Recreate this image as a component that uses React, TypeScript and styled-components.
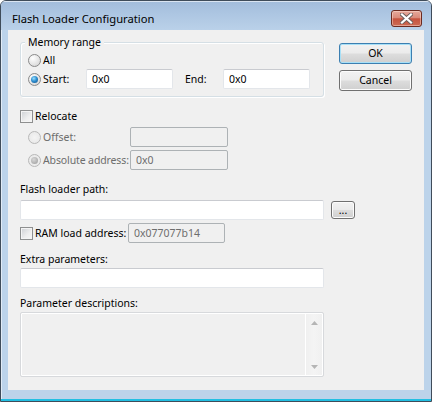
import React from "react";
import styled, { createGlobalStyle, css } from "styled-components";

const UI_FONT = `"Noto Sans", "Segoe UI", sans-serif`;

const GlobalStyle = createGlobalStyle`
  html, body { margin: 0; padding: 0; background: #ffffff; }
  body {
    font-family: ${UI_FONT};
    font-size: 10.5px;
    color: #000000;
  }
  * { box-sizing: border-box; }
`;

/* ---------- window chrome ---------- */

const Window = styled.div`
  width: 432px;
  height: 402px;
  display: flex;
  flex-direction: column;
  border: 1px solid #3f4c5a;
  border-radius: 6px 6px 0 0;
  background: #bcd3ea;
  box-shadow: inset 0 -2px 0 #22bfe2, inset 1px 1px 0 rgba(255, 255, 255, 0.55);
  padding: 0 7px 11px 7px;
  overflow: hidden;
`;

const TitleBar = styled.div`
  height: 29px;
  margin: 0 -7px;
  padding: 9px 9px 0 11px;
  display: flex;
  align-items: flex-start;
  justify-content: space-between;
  background: linear-gradient(to bottom, #a2bcdb 0%, #adc6e2 45%, #bad1e9 100%);
  box-shadow: inset 0 1px 0 rgba(255, 255, 255, 0.6);
`;

const Title = styled.span`
  font-size: 11.2px;
  line-height: 17px;
  color: #000;
`;

const CloseButton = styled.div`
  width: 31px;
  height: 17px;
  border: 1px solid #6b2a20;
  border-radius: 3px;
  display: flex;
  align-items: center;
  justify-content: center;
  background: linear-gradient(
    to bottom,
    #e6a99c 0%,
    #da8b7b 45%,
    #c6533e 52%,
    #cd6b55 100%
  );
  box-shadow: inset 0 0 0 1px rgba(255, 230, 220, 0.45);
`;

const Client = styled.div`
  flex: 1;
  background: #f0f0f0;
  padding: 12px 0 0 12px;
  display: flex;
  flex-direction: column;
`;

/* ---------- common controls ---------- */

const TopRow = styled.div`
  display: flex;
  align-items: flex-start;
`;

const GroupBox = styled.div`
  position: relative;
  width: 304px;
  height: 55px;
  border: 1px solid #d5dfe5;
  border-radius: 3px;
  box-shadow: inset 1px 1px 0 #ffffff, 1px 1px 0 #ffffff;
  padding: 9px 0 0 7px;
  display: flex;
  flex-direction: column;
  gap: 1px;
`;

const GroupLegend = styled.span`
  position: absolute;
  top: -9px;
  left: 4px;
  padding: 0 3px;
  line-height: 16px;
  background: #f0f0f0;
`;

const ButtonColumn = styled.div`
  margin-left: 15px;
  margin-top: 1px;
  display: flex;
  flex-direction: column;
  gap: 6px;
`;

const PushButton = styled.button<{
  $w: number;
  $h: number;
  $ml?: number;
  $default?: boolean;
}>`
  width: ${(p) => p.$w}px;
  height: ${(p) => p.$h}px;
  margin: 0 0 0 ${(p) => p.$ml ?? 0}px;
  padding: 0;
  flex: none;
  font-family: ${UI_FONT};
  font-size: 10.5px;
  line-height: 1;
  color: #000;
  border: 1px solid #707070;
  border-radius: 3px;
  background: linear-gradient(
    to bottom,
    #f2f2f2 0%,
    #ebebeb 48%,
    #dddddd 52%,
    #cfcfcf 100%
  );
  box-shadow: inset 0 0 0 1px #fcfcfc;
  ${(p) =>
    p.$default &&
    css`
      border-color: #3c7fb1;
      box-shadow: inset 0 0 0 1px #a8e0f7;
    `}
`;

const Row = styled.div<{ $mt?: number; $h: number; $indent?: number }>`
  display: flex;
  align-items: center;
  height: ${(p) => p.$h}px;
  margin-top: ${(p) => p.$mt ?? 0}px;
  padding-left: ${(p) => p.$indent ?? 0}px;
`;

const Choice = styled.label<{ $w?: number }>`
  display: flex;
  align-items: center;
  flex: none;
  width: ${(p) => (p.$w ? `${p.$w}px` : "auto")};
`;

const Caption = styled.span<{ $disabled?: boolean; $tight?: boolean }>`
  margin-left: 2px;
  line-height: 16px;
  white-space: nowrap;
  letter-spacing: ${(p) => (p.$tight ? "-0.12px" : "0")};
  color: ${(p) => (p.$disabled ? "#6d6d6d" : "#000")};
`;

const FieldLabel = styled.div<{ $mt: number }>`
  margin-top: ${(p) => p.$mt}px;
  line-height: 16px;
  height: 16px;
`;

const InlineLabel = styled.span<{ $w: number; $ml?: number }>`
  width: ${(p) => p.$w}px;
  margin-left: ${(p) => p.$ml ?? 0}px;
  line-height: 16px;
  flex: none;
`;

const Radio = styled.span<{ $checked?: boolean; $disabled?: boolean }>`
  position: relative;
  width: 13px;
  height: 13px;
  flex: none;
  border-radius: 50%;
  border: 1px solid ${(p) => (p.$disabled ? "#b8b8b8" : "#8a8a8a")};
  background: ${(p) =>
    p.$disabled
      ? "radial-gradient(circle at 50% 50%, #f4f4f4 0%, #e6e6e6 100%)"
      : "radial-gradient(circle at 35% 30%, #ffffff 0%, #e3e3e3 60%, #cfcfcf 100%)"};
  ${(p) =>
    p.$checked &&
    css`
      &::after {
        content: "";
        position: absolute;
        left: 2px;
        top: 2px;
        width: 7px;
        height: 7px;
        border-radius: 50%;
        background: ${p.$disabled
          ? "radial-gradient(circle at 40% 35%, #d8d8d8 0%, #9a9a9a 100%)"
          : "radial-gradient(circle at 40% 35%, #9ae0ff 0%, #2f8fd0 45%, #134f86 100%)"};
      }
    `}
`;

const CheckBox = styled.span`
  width: 13px;
  height: 13px;
  flex: none;
  border: 1px solid #8e8f8f;
  background: linear-gradient(135deg, #cdd0d4 0%, #eeeeee 60%, #f7f7f7 100%);
  box-shadow: inset 0 0 0 1px #f4f4f4;
`;

const TextBox = styled.input<{ $w: number }>`
  width: ${(p) => p.$w}px;
  height: 20px;
  flex: none;
  margin: 0;
  padding: 0 5px;
  font-family: ${UI_FONT};
  font-size: 10.5px;
  color: #000;
  background: #ffffff;
  border: 1px solid;
  border-color: #c9cbd0 #e3e6ea #e3e6ea #e3e6ea;
  border-radius: 2px;
  outline: none;

  &:disabled {
    background: #f0f0f0;
    color: #6d6d6d;
    border-color: #adb2b5;
  }
`;

/* read-only memo with a disabled vertical scroll bar */
const Memo = styled.div`
  margin-top: 1px;
  width: 304px;
  height: 65px;
  display: flex;
  border: 1px solid #d7d9dc;
  border-radius: 2px;
  background: #f0f0f0;
  box-shadow: inset 0 0 0 1px #ffffff;
`;

const MemoBody = styled.div`
  flex: 1;
`;

const ScrollTrack = styled.div`
  width: 17px;
  margin: 1px 1px 1px 0;
  display: flex;
  flex-direction: column;
  justify-content: space-between;
  border-left: 1px solid #ffffff;
  background: linear-gradient(to right, #f0f0f0, #f4f4f4 50%, #f0f0f0);
`;

const ScrollArrow = styled.div`
  height: 17px;
  display: flex;
  align-items: center;
  justify-content: center;
`;

const Arrow = ({ down }: { down?: boolean }) => (
  <svg width="7" height="4" viewBox="0 0 7 4">
    <path
      d={down ? "M0 0 L7 0 L3.5 4 Z" : "M3.5 0 L7 4 L0 4 Z"}
      fill="#b5b5b5"
    />
  </svg>
);

const CloseGlyph = () => (
  <svg width="13" height="11" viewBox="0 0 13 11">
    <path
      d="M2 1.5 L11 9.5 M11 1.5 L2 9.5"
      stroke="#6b5e5c"
      strokeWidth="4"
      strokeLinecap="square"
    />
    <path
      d="M2 1.5 L11 9.5 M11 1.5 L2 9.5"
      stroke="#ffffff"
      strokeWidth="2.2"
      strokeLinecap="square"
    />
  </svg>
);

export default function App() {
  return (
    <>
      <GlobalStyle />
      <Window>
        <TitleBar>
          <Title>Flash Loader Configuration</Title>
          <CloseButton>
            <CloseGlyph />
          </CloseButton>
        </TitleBar>

        <Client>
          <TopRow>
            <GroupBox>
              <GroupLegend>Memory range</GroupLegend>
              <Row $h={16}>
                <Choice>
                  <Radio />
                  <Caption>All</Caption>
                </Choice>
              </Row>
              <Row $h={20}>
                <Choice $w={58}>
                  <Radio $checked />
                  <Caption>Start:</Caption>
                </Choice>
                <TextBox $w={87} value="0x0" readOnly />
                <InlineLabel $w={38} $ml={12}>
                  End:
                </InlineLabel>
                <TextBox $w={87} value="0x0" readOnly />
              </Row>
            </GroupBox>

            <ButtonColumn>
              <PushButton $w={73} $h={21} $default>
                OK
              </PushButton>
              <PushButton $w={73} $h={21}>
                Cancel
              </PushButton>
            </ButtonColumn>
          </TopRow>

          <Row $h={16} $mt={11}>
            <Choice>
              <CheckBox />
              <Caption>Relocate</Caption>
            </Choice>
          </Row>
          <Row $h={20} $mt={3} $indent={8}>
            <Choice $w={102}>
              <Radio $disabled />
              <Caption $disabled>Offset:</Caption>
            </Choice>
            <TextBox $w={98} value="" disabled />
          </Row>
          <Row $h={20} $mt={3} $indent={8}>
            <Choice $w={102}>
              <Radio $disabled $checked />
              <Caption $disabled $tight>
                Absolute address:
              </Caption>
            </Choice>
            <TextBox $w={98} value="0x0" disabled />
          </Row>

          <FieldLabel $mt={11}>Flash loader path:</FieldLabel>
          <Row $h={20} $mt={3}>
            <TextBox $w={304} value="" readOnly />
            <PushButton $w={24} $h={18} $ml={7}>
              ...
            </PushButton>
          </Row>
          <Row $h={20} $mt={3}>
            <Choice $w={108}>
              <CheckBox />
              <Caption>RAM load address:</Caption>
            </Choice>
            <TextBox $w={97} value="0x077077b14" disabled />
          </Row>

          <FieldLabel $mt={8}>Extra parameters:</FieldLabel>
          <Row $h={20} $mt={1}>
            <TextBox $w={304} value="" readOnly />
          </Row>

          <FieldLabel $mt={7}>Parameter descriptions:</FieldLabel>
          <Memo>
            <MemoBody />
            <ScrollTrack>
              <ScrollArrow>
                <Arrow />
              </ScrollArrow>
              <ScrollArrow>
                <Arrow down />
              </ScrollArrow>
            </ScrollTrack>
          </Memo>
        </Client>
      </Window>
    </>
  );
}
